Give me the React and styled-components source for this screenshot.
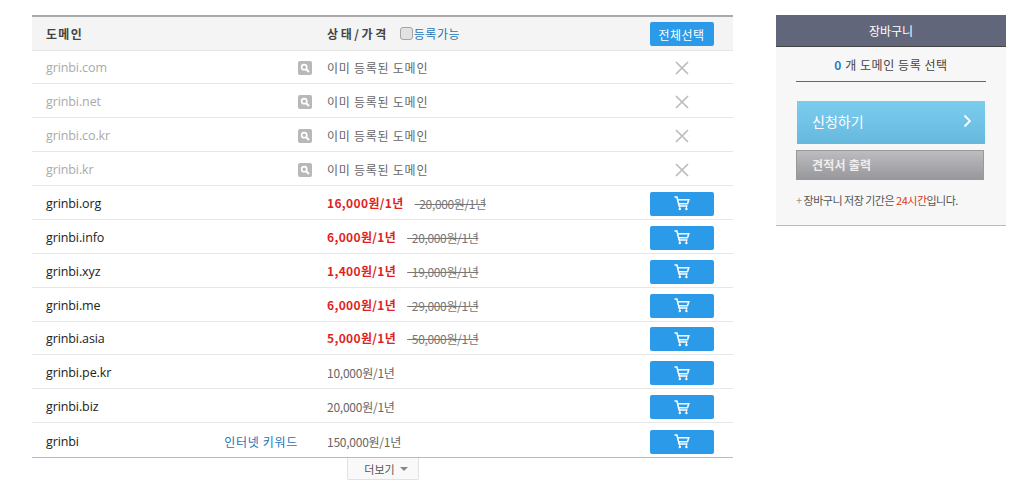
import React from 'react';
import styled, { createGlobalStyle } from 'styled-components';

const taken = ['grinbi.com', 'grinbi.net', 'grinbi.co.kr', 'grinbi.kr'];

const sale = [
  { name: 'grinbi.org', price: '16,000원/1년', old: '20,000원/1년' },
  { name: 'grinbi.info', price: '6,000원/1년', old: '20,000원/1년' },
  { name: 'grinbi.xyz', price: '1,400원/1년', old: '19,000원/1년' },
  { name: 'grinbi.me', price: '6,000원/1년', old: '29,000원/1년' },
  { name: 'grinbi.asia', price: '5,000원/1년', old: '50,000원/1년' },
];

const plain = [
  { name: 'grinbi.pe.kr', price: '10,000원/1년' },
  { name: 'grinbi.biz', price: '20,000원/1년' },
  { name: 'grinbi', price: '150,000원/1년', keyword: '인터넷 키워드' },
];

function CartIcon() {
  return (
    <svg width="16" height="15" viewBox="0 0 16 15" fill="none" stroke="#fff" strokeWidth="1.5">
      <path d="M0.5 1h2.4l2.2 9h8.4" />
      <path d="M3.6 3.8h11.2l-1.3 4H4.6" />
      <path d="M5.8 10v2.4M12.4 10v2.4" strokeWidth="1" />
      <circle cx="5.8" cy="13" r="1.2" fill="#fff" stroke="none" />
      <circle cx="12.4" cy="13" r="1.2" fill="#fff" stroke="none" />
    </svg>
  );
}

function SearchIcon() {
  return (
    <svg width="10" height="10" viewBox="0 0 10 10" fill="none" stroke="#fff">
      <circle cx="4.2" cy="4.2" r="2.6" strokeWidth="1.6" />
      <path d="M6.2 6.2L9 9" strokeWidth="2" />
    </svg>
  );
}

function CloseIcon() {
  return (
    <svg width="14" height="14" viewBox="0 0 14 14" stroke="#bcbcbc" strokeWidth="1.7">
      <path d="M1 1l12 12M13 1L1 13" />
    </svg>
  );
}

function App() {
  return (
    <Page>
      <GlobalStyle />
      <Main>
        <Table>
          <HeadRow>
            <DomainHead>도메인</DomainHead>
            <Extra />
            <StatusHead>
              상태/가격
              <AvailableLabel>
                <Check type="checkbox" />
                등록가능
              </AvailableLabel>
            </StatusHead>
            <Action>
              <SelectAll>전체선택</SelectAll>
            </Action>
          </HeadRow>
          {taken.map(name => (
            <Row key={name}>
              <Domain $muted>{name}</Domain>
              <Extra>
                <SearchBadge><SearchIcon /></SearchBadge>
              </Extra>
              <Status $wide>이미 등록된 도메인</Status>
              <Action><CloseIcon /></Action>
            </Row>
          ))}
          {sale.map(item => (
            <Row key={item.name}>
              <Domain>{item.name}</Domain>
              <Extra />
              <Status>
                <SalePrice>{item.price}</SalePrice>
                <OldPrice>{'  ' + item.old}</OldPrice>
              </Status>
              <Action><CartButton><CartIcon /></CartButton></Action>
            </Row>
          ))}
          {plain.map(item => (
            <Row key={item.name}>
              <Domain>{item.name}</Domain>
              <Extra>{item.keyword && <Keyword>{item.keyword}</Keyword>}</Extra>
              <Status>{item.price}</Status>
              <Action><CartButton><CartIcon /></CartButton></Action>
            </Row>
          ))}
        </Table>
        <MoreButton>
          더보기
          <Caret />
        </MoreButton>
      </Main>
      <Cart>
        <CartTitle>장바구니</CartTitle>
        <CartBody>
          <Count><b>0</b> 개 도메인 등록 선택</Count>
          <ApplyButton>
            신청하기
            <svg width="9" height="14" viewBox="0 0 9 14" fill="none" stroke="#fff" strokeWidth="1.8">
              <path d="M1.5 1.5L7 7l-5.5 5.5" />
            </svg>
          </ApplyButton>
          <QuoteButton>견적서 출력</QuoteButton>
          <Note><i>+</i> 장바구니 저장 기간은 <em>24시간</em>입니다.</Note>
        </CartBody>
      </Cart>
    </Page>
  );
}

export default App;

const GlobalStyle = createGlobalStyle`
body {
  margin: 0;
  background: #fff;
  font-family: "Noto Sans CJK KR", "Liberation Sans", sans-serif;
}
`

const Page = styled.div`
display: flex;
align-items: flex-start;
width: 1025px;
height: 490px;
padding: 15px 0 0 32px;
box-sizing: border-box;
overflow: hidden;
`

const Main = styled.div`
width: 701px;
display: flex;
flex-direction: column;
align-items: center;
`

const Table = styled.div`
width: 100%;
border-top: 2px solid #aaa;
border-bottom: 1px solid #bbb;
box-sizing: border-box;
`

const Row = styled.div`
display: grid;
grid-template-columns: 195px 71px 322px 113px;
align-items: center;
height: 33.875px;
padding-top: 2px;
box-sizing: border-box;
border-bottom: 1px solid #e6e6e6;
font-size: 12px;
color: #666;
&:last-child {
  border-bottom: 0;
}
`

const HeadRow = styled(Row)`
height: 33.5px;
padding-top: 0;
background: #f4f4f4;
font-weight: bold;
border-bottom: 1px solid #e4e4e4;
color: #444;
`

const Domain = styled.div`
padding-left: 14px;
font-family: "Open Sans", "Liberation Sans", sans-serif;
font-size: 12.5px;
letter-spacing: -0.1px;
color: ${props => (props.$muted ? '#aaa' : '#222')};
`

const DomainHead = styled.div`
padding-left: 14px;
letter-spacing: 1.3px;
`

const Extra = styled.div`
display: flex;
justify-content: flex-end;
`

const Status = styled.div`
display: flex;
align-items: center;
padding-left: 29px;
letter-spacing: ${props => (props.$wide ? '0.75px' : '-0.25px')};
white-space: nowrap;
`

const StatusHead = styled(Status)`
letter-spacing: 2.6px;
`

const AvailableLabel = styled.label`
display: flex;
align-items: center;
margin-left: 11px;
font-weight: normal;
color: #1d76b8;
letter-spacing: 0.5px;
`

const Check = styled.input`
appearance: none;
width: 13px;
height: 13px;
margin: 0 1px 0 0;
background: #e2e2e2;
border: 1px solid #a5a5a5;
border-radius: 3px;
`

const Action = styled.div`
display: flex;
justify-content: center;
align-items: center;
padding-left: 10px;
`

const SelectAll = styled.button`
width: 64px;
height: 24px;
margin-top: 2px;
padding: 0;
border: 0;
border-radius: 2px;
background: #2b9ae8;
color: #fff;
font-family: inherit;
font-size: 12px;
letter-spacing: 0.5px;
`

const CartButton = styled(SelectAll)`
display: flex;
align-items: center;
justify-content: center;
margin-top: 1px;
`

const SearchBadge = styled.span`
display: flex;
align-items: center;
justify-content: center;
width: 14px;
height: 14px;
margin-right: -14px;
border-radius: 2px;
background: #b8b8b8;
`

const Keyword = styled.span`
color: #1d76b8;
white-space: nowrap;
letter-spacing: 0.7px;
`

const SalePrice = styled.b`
margin-bottom: 2px;
color: #e01f1f;
letter-spacing: 0.35px;
`

const OldPrice = styled.s`
margin-left: 11px;
color: #777;
letter-spacing: -0.35px;
white-space: pre;
`

const MoreButton = styled.button`
display: flex;
align-items: center;
justify-content: center;
gap: 5px;
width: 72px;
height: 22px;
padding: 0 0 0 6px;
margin-left: 1px;
border: 1px solid #e2e2e2;
border-top: 0;
border-radius: 0 0 2px 2px;
background: #f9f9f9;
color: #555;
font-family: inherit;
font-size: 11px;
`

const Caret = styled.i`
border: 4px solid transparent;
border-top: 4px solid #888;
border-bottom: 0;
`

const Cart = styled.aside`
width: 230px;
margin-left: 43px;
background: #f7f7f7;
border-bottom: 1px solid #bbb;
`

const CartTitle = styled.div`
height: 32px;
line-height: 32px;
text-align: center;
background: #62667a;
border-bottom: 1px solid #444;
box-sizing: border-box;
color: #fff;
font-size: 12px;
`

const CartBody = styled.div`
display: flex;
flex-direction: column;
align-items: center;
height: 178px;
box-sizing: border-box;
`

const Count = styled.div`
width: 190px;
height: 34px;
line-height: 35px;
margin-bottom: 20px;
text-align: center;
border-bottom: 1px solid #666;
font-size: 12px;
color: #444;
letter-spacing: 0.55px;
b {
  color: #2a7fc8;
}
`

const ApplyButton = styled.button`
display: flex;
align-items: center;
justify-content: space-between;
width: 188px;
height: 43px;
padding: 0 13px 4px 15px;
margin-top: -1px;
margin-bottom: 6px;
border: 0;
background: linear-gradient(#7bcdf0, #66b9dd);
color: #fff;
font-family: inherit;
font-size: 14px;
`

const QuoteButton = styled.button`
width: 188px;
height: 30px;
padding: 0 0 2px 15px;
margin-right: 2px;
text-align: left;
border: 1px solid #999;
background: linear-gradient(#bdbdc0, #98989c);
color: #eee;
font-family: inherit;
font-size: 12px;
font-weight: bold;
letter-spacing: 0.2px;
`

const Note = styled.div`
width: 190px;
margin-top: 12px;
font-size: 11px;
color: #555;
white-space: nowrap;
letter-spacing: -0.5px;
i {
  font-style: normal;
  color: #999;
}
em {
  font-style: normal;
  color: #d83a1a;
}
`
